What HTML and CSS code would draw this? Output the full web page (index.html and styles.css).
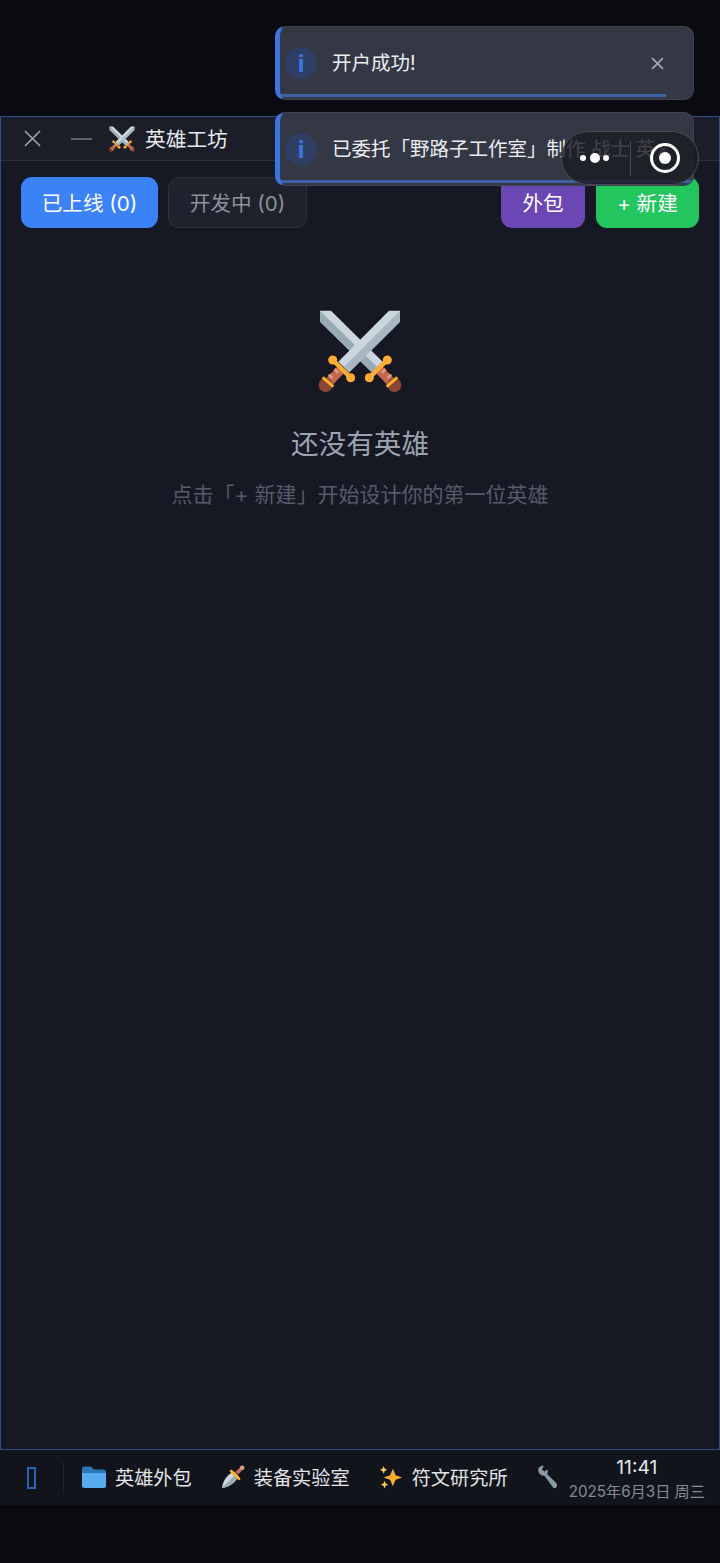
FILE: index.html
```html
<!DOCTYPE html>
<html lang="zh-CN">
<head>
    <meta charset="UTF-8">
    <meta name="viewport" content="width=device-width, initial-scale=1.0">
    <title>英雄工坊</title>
    <link rel="stylesheet" href="styles.css">
</head>
<body>
    <svg class="defs" width="0" height="0">
        <symbol id="swords" viewBox="0 0 84 84">
            <path d="M2 1.7 13 1.7 64.7 52.700 53.700 63.300 2 12.700Z" fill="#ccd6dd"/>
            <path d="M2 1.700 59.200 58 53.700 63.300 2 12.700Z" fill="#99aab5"/>
            <path d="M60.300 60 77 77" stroke="#c1694f" stroke-width="9"/>
            <path d="M64 63.700 67.500 60M69.500 69 73 65.500" stroke="#d99e82" stroke-width="3"/>
            <path d="M69.300 51 51.300 68.700" stroke="#ffac33" stroke-width="4.500"/>
            <circle cx="69.300" cy="51" r="4.500" fill="#ffac33"/>
            <circle cx="51.300" cy="68.700" r="4.500" fill="#ffac33"/>
            <circle cx="76.300" cy="76" r="7" fill="#8a4633"/>
            <path d="M79.300 68.300 68.700 77.700" stroke="#ffac33" stroke-width="3"/>

            <path d="M82 1.700 71 1.700 20.300 52.700 31.300 63.300 82 12.700Z" fill="#ccd6dd"/>
            <path d="M82 1.700 82 12.700 31.300 63.300 25.800 58Z" fill="#a9b7c0"/>
            <path d="M23.700 60 7 77" stroke="#c1694f" stroke-width="9"/>
            <path d="M20 63.700 16.500 60M14.500 69 11 65.500" stroke="#d99e82" stroke-width="3"/>
            <path d="M14.700 51 32.700 68.700" stroke="#ffac33" stroke-width="4.500"/>
            <circle cx="14.700" cy="51" r="4.500" fill="#ffac33"/>
            <circle cx="32.700" cy="68.700" r="4.500" fill="#ffac33"/>
            <circle cx="7.700" cy="76" r="7" fill="#8a4633"/>
            <path d="M4.700 68.300 15.300 77.700" stroke="#ffac33" stroke-width="3"/>
        </symbol>
    </svg>

    <div class="top-gap"></div>

    <main class="window">
        <header class="titlebar">
            <svg class="win-close" viewBox="0 0 18 18"><path d="M1 1 17 17M17 1 1 17"/></svg>
            <span class="win-min"></span>
            <svg class="title-icon"><use href="#swords"/></svg>
            <span class="title-text">英雄工坊</span>
        </header>

        <section class="content">
            <div class="toolbar">
                <button class="btn btn-active">已上线 (0)</button>
                <button class="btn btn-idle">开发中 (0)</button>
                <span class="spacer"></span>
                <button class="btn btn-purple">外包</button>
                <button class="btn btn-green">+ 新建</button>
            </div>
            <div class="empty">
                <svg class="empty-icon"><use href="#swords"/></svg>
                <h2>还没有英雄</h2>
                <p>点击「+ 新建」开始设计你的第一位英雄</p>
            </div>
        </section>
    </main>

    <nav class="taskbar">
        <span class="start-glyph"></span>
        <span class="task-divider"></span>
        <div class="task-item">
            <svg class="task-icon" viewBox="0 0 24 22">
                <path d="M0 3a2.500 2.500 0 0 1 2.500-2.500h6.500l3 3h9.500a2.500 2.500 0 0 1 2.500 2.500v4H0Z" fill="#2b78b8"/>
                <path d="M0 7h24v12.500a2.500 2.500 0 0 1-2.500 2.500h-19a2.500 2.500 0 0 1-2.500-2.500Z" fill="#55acee"/>
            </svg>
            <span>英雄外包</span>
        </div>
        <div class="task-item">
            <svg class="task-icon" viewBox="0 0 26 26">
                <path d="M1 25C2 17 7 10 14 7l5 5C16 19 9 24 1 25Z" fill="#ccd6dd"/>
                <path d="M1 25 16.500 9.500 19 12C16 19 9 24 1 25Z" fill="#99aab5"/>
                <path d="M11 6.500 19.500 15" stroke="#ffac33" stroke-width="3" stroke-linecap="round"/>
                <path d="M17 9 23 3" stroke="#c1694f" stroke-width="4"/>
                <circle cx="23" cy="3" r="2.500" fill="#d99e82"/>
            </svg>
            <span>装备实验室</span>
        </div>
        <div class="task-item">
            <svg class="task-icon" viewBox="0 0 26 26">
                <path d="M15 4 18 11 25 13.500 18 16 15 23 12 16 5 13.500 12 11Z" fill="#ffac33"/>
                <path d="M5 1 6.200 4 9 5.200 6.200 6.400 5 9.400 3.800 6.400 1 5.200 3.800 4Z" fill="#ffcc4d"/>
                <path d="M6 17 7.200 20 10 21.200 7.200 22.400 6 25.400 4.800 22.400 2 21.200 4.800 20Z" fill="#ffcc4d"/>
            </svg>
            <span>符文研究所</span>
        </div>
        <svg class="task-icon wrench" viewBox="0 0 22 26">
            <path d="M1 5.500C1 2.500 4 .5 7 1L5 4.500 7.500 7 11 5C11.700 7 11.300 8.500 10.500 9.800L20.500 19.500C21.500 21 21.500 23 20.500 24.500 19.500 25.500 18 25.500 17 24.500L7.500 11.500C4 12 1 9 1 5.500Z" fill="#8899a6"/>
        </svg>
        <div class="clock">
            <span class="clock-time">11:41</span>
            <span class="clock-date">2025年6月3日 周三</span>
        </div>
    </nav>

    <div class="toasts">
        <div class="toast">
            <span class="toast-icon">i</span>
            <span class="toast-text">开户成功!</span>
            <svg class="toast-close" viewBox="0 0 12 12"><path d="M1 1 11 11M11 1 1 11"/></svg>
            <span class="toast-bar toast-bar-short"></span>
        </div>
        <div class="toast">
            <span class="toast-icon">i</span>
            <span class="toast-text">已委托「野路子工作室」制作 战士 英</span>
            <svg class="toast-close" viewBox="0 0 12 12"><path d="M1 1 11 11M11 1 1 11"/></svg>
            <span class="toast-bar"></span>
        </div>
    </div>

    <div class="capsule">
        <span class="cap-dots"><i></i><i class="big"></i><i></i></span>
        <span class="cap-line"></span>
        <span class="cap-ring"><i></i></span>
    </div>
</body>
</html>
```

FILE: styles.css
```css
/* Grund-Layout */
* {
    box-sizing: border-box;
}

html, body {
    margin: 0;
    height: 100%;
}

body {
    position: relative;
    height: 1563px;
    overflow: hidden;
    background: #0a0b10;
    color: #e5e7eb;
    font-family: Inter, "Noto Sans CJK SC", sans-serif;
}

.defs {
    position: absolute;
}

.top-gap {
    height: 116px;
}

/* Fenster */
.window {
    display: flex;
    flex-direction: column;
    height: 1334px;
    border: 1px solid #2d4f8e;
    background: #161823;
}

.titlebar {
    display: flex;
    align-items: center;
    height: 44px;
    padding-left: 23px;
    background: #1b1d28;
    border-bottom: 1px solid #2d2f3b;
}

.win-close {
    width: 17px;
    height: 17px;
    fill: none;
    stroke: #a3a6ad;
    stroke-width: 1.600;
}

.win-min {
    width: 21px;
    height: 2px;
    margin-left: 30px;
    background: #5f626b;
}

.title-icon {
    width: 26px;
    height: 26px;
    margin-left: 17px;
}

.title-text {
    margin-left: 10px;
    padding-bottom: 2px;
    font-size: 20.700px;
    color: #e8e9ec;
}

.content {
    flex: 1;
    padding: 16px 20px;
}

.toolbar {
    display: flex;
    gap: 10px;
}

.spacer {
    flex: 1;
}

.btn {
    height: 51px;
    padding: 0 0 2px;
    border: 1px solid transparent;
    border-radius: 11px;
    font-family: inherit;
    font-size: 20.600px;
    color: #fff;
}

.btn-active {
    width: 137px;
    background: #3b82f6;
}

.btn-idle {
    width: 139px;
    background: #1f222c;
    border-color: #2f323c;
    color: #8d919b;
}

.btn-purple {
    width: 84px;
    margin-right: 1px;
    background: #6b46b5;
}

.btn-green {
    width: 103px;
    background: #22c55e;
}

/* Leerer Zustand */
.empty {
    display: flex;
    flex-direction: column;
    align-items: center;
    padding-top: 81px;
}

.empty-icon {
    width: 84px;
    height: 84px;
}

.empty h2 {
    margin: 31px 0 0;
    font-size: 27.600px;
    font-weight: 400;
    line-height: 40px;
    color: #9ca3af;
}

.empty p {
    margin: 16px 0 0;
    font-size: 21px;
    line-height: 30px;
    color: #565b69;
}

/* Taskleiste */
.taskbar {
    display: flex;
    align-items: center;
    height: 55px;
    padding-left: 27px;
    background: #12141c;
}

.start-glyph {
    width: 9px;
    height: 22px;
    border: 2px solid #2a62b8;
}

.task-divider {
    width: 1px;
    height: 32px;
    margin: 0 18px 0 27px;
    background: #22252f;
}

.task-item {
    display: flex;
    align-items: center;
    gap: 9px;
    margin-right: 29px;
    padding-bottom: 2px;
    font-size: 19.200px;
    color: #e2e4e8;
}

.task-icon {
    width: 24px;
    height: 24px;
}

.wrench {
    width: 21px;
    margin-bottom: 2px;
}

.clock {
    display: flex;
    flex-direction: column;
    align-items: center;
    margin-left: 11px;
    padding-top: 2px;
    white-space: nowrap;
}

.clock-time {
    font-size: 19.200px;
    line-height: 26px;
    color: #e5e7eb;
}

.clock-date {
    font-size: 15.200px;
    line-height: 24px;
    color: #868b95;
}

/* Toasts liegen ueber dem Fenster */
.toasts {
    position: absolute;
    top: 26px;
    left: 275px;
    display: flex;
    flex-direction: column;
    gap: 12px;
    width: 419px;
}

.toast {
    position: relative;
    display: flex;
    align-items: center;
    height: 74px;
    padding: 0 29px 0 5px;
    overflow: hidden;
    background: #343744;
    border: 1px solid #3f424f;
    border-left: 5px solid #3b76e0;
    border-radius: 10px;
}

.toast-icon {
    flex: none;
    width: 32px;
    height: 32px;
    border-radius: 50%;
    background: #2e3f63;
    color: #3b76e0;
    font-family: "Noto Sans", sans-serif;
    font-size: 24px;
    font-weight: 700;
    line-height: 32px;
    text-align: center;
}

.toast-text {
    flex: 1;
    margin-left: 15px;
    padding-bottom: 3px;
    white-space: nowrap;
    font-size: 19.500px;
    color: #eceef1;
}

.toast-close {
    flex: none;
    width: 13px;
    height: 13px;
    margin-left: 2px;
    fill: none;
    stroke: #a8abb3;
    stroke-width: 1.500;
}

.toast-bar {
    position: absolute;
    left: 0;
    right: 0;
    bottom: 2px;
    height: 3px;
    background: #3e63a8;
}

.toast-bar-short {
    right: 27px;
}

/* Kapsel oben rechts */
.capsule {
    position: absolute;
    top: 131px;
    left: 561px;
    display: flex;
    align-items: center;
    width: 138px;
    height: 54px;
    background: rgba(27, 28, 35, 0.82);
    border: 1px solid #484b56;
    border-radius: 27px;
}

.cap-dots {
    display: flex;
    align-items: center;
    gap: 3.500px;
    margin-left: 18px;
}

.cap-dots i {
    width: 6px;
    height: 6px;
    border-radius: 50%;
    background: #fff;
}

.cap-dots i.big {
    width: 10px;
    height: 10px;
}

.cap-line {
    width: 1px;
    height: 35px;
    margin-left: 21px;
    background: #4a4c55;
}

.cap-ring {
    display: flex;
    align-items: center;
    justify-content: center;
    width: 30px;
    height: 30px;
    margin-left: 19px;
    border: 3px solid #fff;
    border-radius: 50%;
}

.cap-ring i {
    width: 12px;
    height: 12px;
    border-radius: 50%;
    background: #fff;
}
```
